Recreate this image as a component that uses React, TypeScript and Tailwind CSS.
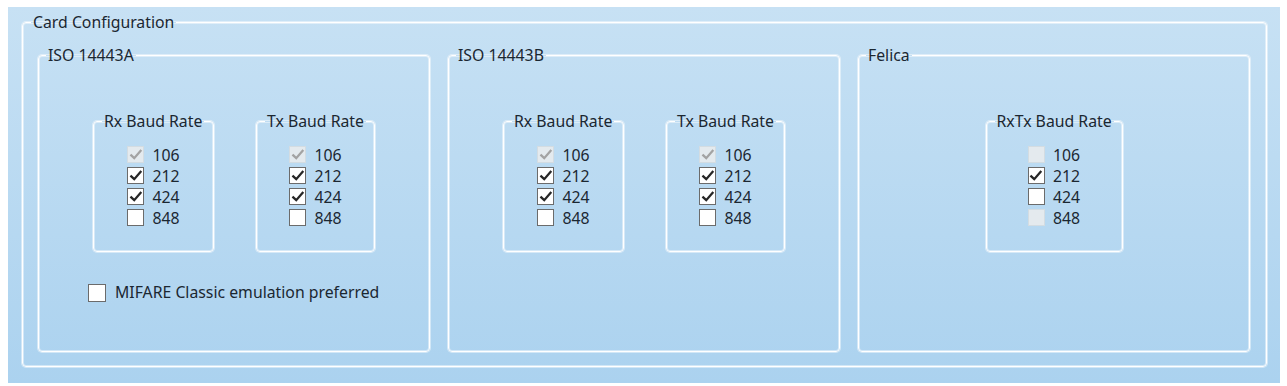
import React from "react";

const font = { fontFamily: '"Noto Sans", "Open Sans", sans-serif' };

type BoxProps = { checked?: boolean; disabled?: boolean; size?: string };

function CheckBox({ checked = false, disabled = false, size = "w-[17px] h-[17px]" }: BoxProps) {
  const box = disabled
    ? "bg-[#e4eaee] border-[#d3dce2]"
    : "bg-white border-[#6b6b6b]";
  return (
    <span className={`${size} shrink-0 border flex items-center justify-center ${box}`}>
      {checked && (
        <svg viewBox="0 0 16 16" className="w-[14px] h-[14px]">
          <path
            d="M2.6 8.4 L6 11.6 L13.2 3.4"
            fill="none"
            stroke={disabled ? "#a3a3a3" : "#262626"}
            strokeWidth="2.6"
            strokeLinecap="square"
          />
        </svg>
      )}
    </span>
  );
}

type Opt = { label: string; checked?: boolean; disabled?: boolean };

function BaudGroup({ title, width, options }: { title: string; width: string; options: Opt[] }) {
  return (
    <fieldset
      className={`${width} h-[141px] rounded-[4px] border border-white shadow-[0_0_0_1px_rgba(255,255,255,0.45),inset_0_0_0_1px_rgba(255,255,255,0.45)]`}
    >
      <legend className="ml-[8px] px-[2px] leading-[20px]">{title}</legend>
      <div className="flex flex-col items-center pt-[13px]">
        <div className="flex flex-col">
          {options.map((o) => (
            <div key={o.label} className="h-[21px] flex items-center gap-[8px]">
              <CheckBox checked={o.checked} disabled={o.disabled} />
              <span className="leading-[20px]">{o.label}</span>
            </div>
          ))}
        </div>
      </div>
    </fieldset>
  );
}

function Group({ title, children }: { title: string; children?: React.ReactNode }) {
  return (
    <fieldset className="h-[307px] rounded-[4px] border border-white shadow-[0_0_0_1px_rgba(255,255,255,0.45),inset_0_0_0_1px_rgba(255,255,255,0.45)]">
      <legend className="ml-[7px] px-[2px] leading-[20px]">{title}</legend>
      {children}
    </fieldset>
  );
}

const iso = (): Opt[] => [
  { label: "106", checked: true, disabled: true },
  { label: "212", checked: true },
  { label: "424", checked: true },
  { label: "848" },
];

export default function App() {
  return (
    <div className="min-h-screen bg-white pt-[7px] pl-[8px] text-[15.8px] text-[#1b2731]" style={font}>
      <div className="w-[1272px] h-[376px] bg-gradient-to-b from-[#c7e1f4] to-[#abd2ef] pt-[5px] pl-[14px]">
        <fieldset className="w-[1245px] h-[355px] rounded-[4px] border border-white shadow-[0_0_0_1px_rgba(255,255,255,0.45),inset_0_0_0_1px_rgba(255,255,255,0.45)]">
          <legend className="ml-[8px] px-[2px] leading-[20px]">Card Configuration</legend>
          <div className="grid grid-cols-[392px_392px_392px] gap-[18px] pl-[15px] pt-[13px]">
            <Group title="ISO 14443A">
              <div className="flex justify-center gap-[42px] pt-[46px]">
                <BaudGroup title="Rx Baud Rate" width="w-[121px]" options={iso()} />
                <BaudGroup title="Tx Baud Rate" width="w-[119px]" options={iso()} />
              </div>
              <div className="flex items-center gap-[9px] pl-[49px] mt-[30px] h-[21px]">
                <CheckBox size="w-[18px] h-[18px]" />
                <span>MIFARE Classic emulation preferred</span>
              </div>
            </Group>
            <Group title="ISO 14443B">
              <div className="flex justify-center gap-[42px] pt-[46px]">
                <BaudGroup title="Rx Baud Rate" width="w-[121px]" options={iso()} />
                <BaudGroup title="Tx Baud Rate" width="w-[119px]" options={iso()} />
              </div>
            </Group>
            <Group title="Felica">
              <div className="flex justify-center pt-[46px]">
                <BaudGroup
                  title="RxTx Baud Rate"
                  width="w-[137px]"
                  options={[
                    { label: "106", disabled: true },
                    { label: "212", checked: true },
                    { label: "424" },
                    { label: "848", disabled: true },
                  ]}
                />
              </div>
            </Group>
          </div>
        </fieldset>
      </div>
    </div>
  );
}
